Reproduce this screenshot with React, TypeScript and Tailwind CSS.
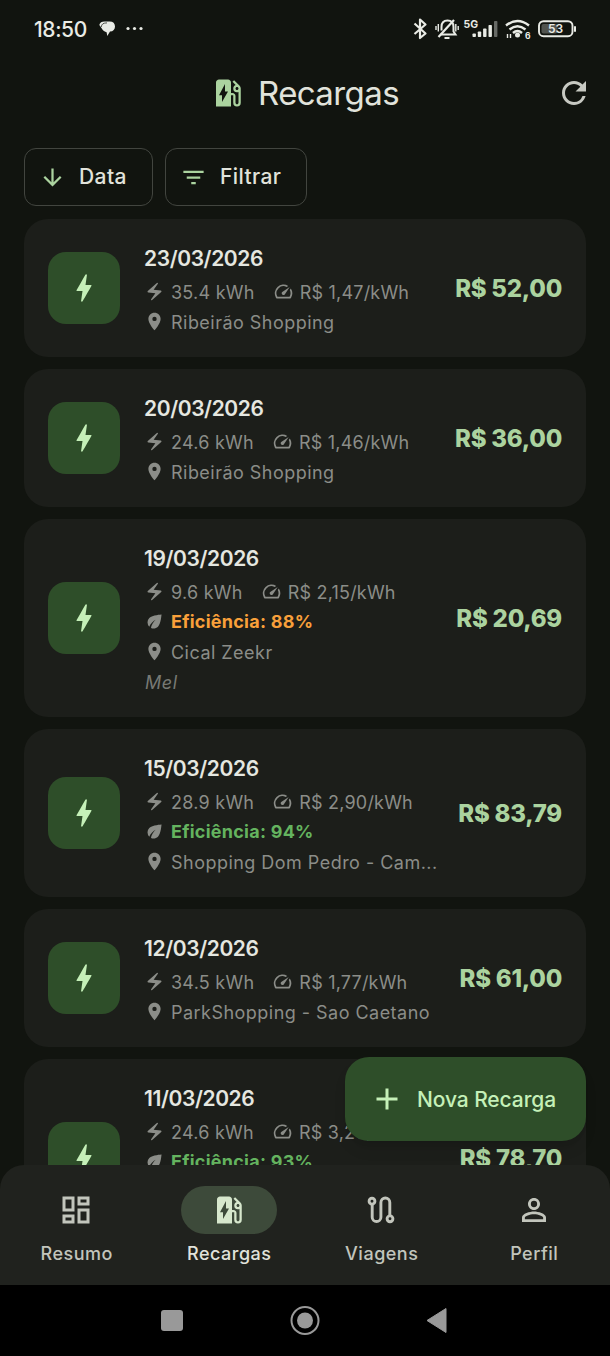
import React from "react";
import {
  MdEvStation, MdBolt, MdElectricBolt, MdSpeed, MdEco, MdLocationOn, MdRefresh,
  MdArrowDownward, MdFilterList, MdAdd, MdOutlineDashboard, MdPersonOutline,
} from "react-icons/md";

type Charge = {
  date: string;
  kwh: string;
  rate: string;
  price: string;
  height: string;
  place?: string;
  efficiency?: string;
  effColor?: string;
  note?: string;
};

const charges: Charge[] = [
  { date: "23/03/2026", kwh: "35.4 kWh", rate: "R$ 1,47/kWh", price: "R$ 52,00", height: "h-[138px]", place: "Ribeirão Shopping" },
  { date: "20/03/2026", kwh: "24.6 kWh", rate: "R$ 1,46/kWh", price: "R$ 36,00", height: "h-[138px]", place: "Ribeirão Shopping" },
  { date: "19/03/2026", kwh: "9.6 kWh", rate: "R$ 2,15/kWh", price: "R$ 20,69", height: "h-[198px]", place: "Cical Zeekr", efficiency: "88%", effColor: "text-[#f9a03a]", note: "Mel" },
  { date: "15/03/2026", kwh: "28.9 kWh", rate: "R$ 2,90/kWh", price: "R$ 83,79", height: "h-[168px]", place: "Shopping Dom Pedro - Cam...", efficiency: "94%", effColor: "text-[#64b35f]" },
  { date: "12/03/2026", kwh: "34.5 kWh", rate: "R$ 1,77/kWh", price: "R$ 61,00", height: "h-[138px]", place: "ParkShopping - Sao Caetano" },
  { date: "11/03/2026", kwh: "24.6 kWh", rate: "R$ 3,20/kWh", price: "R$ 78,70", height: "h-[198px]", efficiency: "93%", effColor: "text-[#64b35f]" },
];

function RouteIcon({ size = 36 }: { size?: number }) {
  return (
    <svg width={size} height={size} viewBox="0 0 36 36" fill="none" stroke="currentColor" strokeWidth="2.900">
      <circle cx="9" cy="9.200" r="2.900" />
      <path d="M9.200 12V25.200a4.300 4.300 0 0 0 8.700 0V10.500a4.400 4.400 0 0 1 8.900 0V24" />
      <circle cx="27" cy="26.800" r="2.900" />
    </svg>
  );
}

function StatusBar() {
  return (
    <div className="flex h-[57px] shrink-0 items-center pr-[34px] pl-[34px] text-[#e9ebe5]">
      <span className="w-[65px] pt-[2px] text-[21px] font-medium tracking-[-0.4px]">18:50</span>
      <svg className="h-[18px] w-[18px]" viewBox="0 0 18 18" fill="currentColor">
        <path d="M5.500 1.500h5.200c3.400 0 5.300 2 5.300 4.900s-1.800 4.900-5 5.200L8.300 16 7.600 12.200C4.900 11.300 3.200 9.800 2.500 8L.300 4.900C.800 2.600 2.800 1.500 5.500 1.500z" />
        <path d="M2.300 7C2.400 4 4.500 2.900 8 2.900" fill="none" stroke="#11140f" strokeWidth=".7" />
      </svg>
      <svg className="ml-[9px] h-[6px] w-[18px]" viewBox="0 0 18 6" fill="currentColor">
        <circle cx="2" cy="2.500" r="1.600" /><circle cx="8.500" cy="2.500" r="1.600" /><circle cx="15" cy="2.500" r="1.600" />
      </svg>
      <svg className="ml-auto h-[26px] w-[166px]" viewBox="410 16 166 26" fill="none" stroke="currentColor">
        <path d="M414.500 23.500L425.500 33.500L420 38V19.500L425.500 24.500L414.500 34" strokeWidth="2.200" strokeLinejoin="round" />
        <path d="M440.500 34.500h15l-2-3v-4.500c0-4-2-6.500-6-6.500s-6 2.500-6 6.500v3.500" strokeWidth="2" />
        <path d="M438.500 37L454 20" strokeWidth="2.200" />
        <path d="M444.500 38h5" strokeWidth="2" />
        <path d="M438.300 24v7.500M436 26v4M455.800 24v7.500M458.200 26v4" strokeWidth="1.400" />
        <g fill="currentColor" stroke="none">
          <rect x="472.500" y="33.500" width="3.400" height="3.500" rx=".8" />
          <rect x="477.800" y="31.500" width="3.400" height="5.500" rx=".8" />
          <rect x="483.100" y="28.500" width="3.400" height="8.500" rx=".8" />
          <rect x="488.500" y="25" width="3.400" height="12" rx=".8" />
          <rect x="494" y="21" width="3.400" height="16" rx=".8" opacity=".4" />
          <text x="463.500" y="28" fontSize="10.500" fontWeight="700" className="font-['Inter',sans-serif]">5G</text>
          <text x="525" y="38.500" fontSize="8.500" fontWeight="700" className="font-['Inter',sans-serif]">6</text>
          <rect x="541.500" y="24" width="16" height="9.600" rx="2" opacity=".3" />
          <text x="548" y="33.200" fontSize="12" fontWeight="600" className="font-['Inter',sans-serif]">53</text>
          <circle cx="517.500" cy="35" r="2.500" />
          <rect x="574" y="26" width="2" height="6" rx="1" />
        </g>
        <path d="M506 25.500q11.500-9 23 0M509.500 29.500q8-6.500 16 0M513 33q4.500-4 9 0" strokeWidth="2.400" />
        <path d="M507.500 34v4M510.500 34v4" strokeWidth="1.400" />
        <rect x="539" y="21.200" width="33.500" height="15" rx="4.500" strokeWidth="1.900" />
      </svg>
    </div>
  );
}

function ChargeCard({ c }: { c: Charge }) {
  return (
    <div className={"flex shrink-0 items-center rounded-[24px] bg-[#1c1e1a] px-6 py-5 " + c.height}>
      <div className="flex h-[72px] w-[72px] shrink-0 items-center justify-center rounded-[18px] bg-[#2e4e29] text-[#c5f0b8]">
        <MdBolt size={36} />
      </div>
      <div className="ml-6 flex flex-col self-start pt-0.5 text-[18px] text-[#8b8d88]">
        <div className="h-9 text-[21px] leading-[35px] font-semibold tracking-[-0.4px] text-[#e5e7e0]">{c.date}</div>
        <div className="flex h-[30px] items-center">
          <MdElectricBolt size={21} className="mr-[6px] mb-0.5" />
          <span className="tracking-[0.25px] whitespace-nowrap">{c.kwh}</span>
          <MdSpeed size={21} className="mr-[6px] mb-0.5 ml-[18px]" />
          <span className="tracking-[0.2px] whitespace-nowrap">{c.rate}</span>
        </div>
        {c.efficiency && (
          <div className="flex h-[30px] items-center">
            <MdEco size={21} className="mr-[6px] mb-0.5" />
            <span className={"pb-px font-bold tracking-[0.25px] whitespace-nowrap " + c.effColor}>Eficiência: {c.efficiency}</span>
          </div>
        )}
        {c.place && (
          <div className="flex h-[30px] items-center">
            <MdLocationOn size={21} className="mr-[6px] mb-0.5" />
            <span className="tracking-[0.47px] whitespace-nowrap">{c.place}</span>
          </div>
        )}
        {c.note && <div className="h-[30px] pl-px leading-[31px] tracking-[0.6px] text-[#777974] italic">{c.note}</div>}
      </div>
      <div className="ml-auto pt-0.5 text-[24px] font-extrabold tracking-[-0.25px] whitespace-nowrap text-[#abd39f]">{c.price}</div>
    </div>
  );
}

const tabs = [
  { label: "Resumo", Icon: MdOutlineDashboard },
  { label: "Recargas", Icon: MdEvStation, active: true },
  { label: "Viagens", Icon: RouteIcon },
  { label: "Perfil", Icon: MdPersonOutline },
];

export default function App() {
  return (
    <div className="relative flex h-[1356px] w-[610px] flex-col overflow-hidden bg-[#11140f] font-['Inter',sans-serif]">
      <StatusBar />
      <header className="flex h-[72px] shrink-0 items-center pr-[18px] pl-[210px]">
        <MdEvStation size={36} className="text-[#abd39f]" />
        <h1 className="ml-[12px] pt-[2px] text-[33px] tracking-[-0.6px] text-[#e1e3db]">Recargas</h1>
        <MdRefresh size={36} className="ml-auto text-[#c7c9c2]" />
      </header>
      <div className="flex shrink-0 gap-3 px-6 pt-[19px] pb-[13px] text-[21px] font-medium tracking-[0.4px] text-[#e1e3db]">
        <button className="flex h-[58px] w-[129px] items-center rounded-[12px] border-[1.5px] border-[#42453f] pl-[14px]">
          <MdArrowDownward size={27} className="mr-[13px] text-[#abd39f]" />Data
        </button>
        <button className="flex h-[58px] w-[142px] items-center rounded-[12px] border-[1.5px] border-[#42453f] pl-[14px]">
          <MdFilterList size={27} className="mr-[13px] text-[#abd39f]" />Filtrar
        </button>
      </div>
      <main className="flex min-h-0 flex-1 flex-col gap-3 overflow-hidden px-6">
        {charges.map((c) => <ChargeCard key={c.date} c={c} />)}
      </main>
      <nav className="z-10 -mt-6 grid h-[120px] shrink-0 grid-cols-4 rounded-t-[24px] bg-[#20221e]">
        {tabs.map(({ label, Icon, active }) => (
          <div key={label} className={active ? "flex flex-col items-center pt-[21px] text-[#e1e3db]" : "flex flex-col items-center pt-[21px] text-[#c2c5bc]"}>
            <div className={active ? "flex h-12 w-24 items-center justify-center rounded-full bg-[#3d4a3a] text-[#d7e8cd]" : "flex h-12 w-24 items-center justify-center"}>
              <Icon size={36} />
            </div>
            <span className="mt-2 pl-px text-[18px] leading-6 font-medium tracking-[0.5px]">{label}</span>
          </div>
        ))}
      </nav>
      <button className="absolute top-[1057px] right-6 flex h-[84px] w-[241px] items-center rounded-[24px] bg-[#2e4e29] pl-6 text-[21px] font-medium tracking-[-0.1px] text-[#c5f0b8] shadow-lg">
        <MdAdd size={36} className="mr-3" /><span className="pt-px">Nova Recarga</span>
      </button>
      <div className="h-[71px] shrink-0 bg-black">
        <svg width="610" height="71" viewBox="0 1285 610 71" fill="#999">
          <rect x="161" y="1310" width="22" height="21" rx="3" />
          <circle cx="305" cy="1320.500" r="8" />
          <circle cx="305" cy="1320.500" r="13.500" fill="none" stroke="#999" strokeWidth="2" />
          <path d="M427 1320.500L446 1308.500V1332.500z" strokeLinejoin="round" stroke="#999" />
        </svg>
      </div>
    </div>
  );
}
